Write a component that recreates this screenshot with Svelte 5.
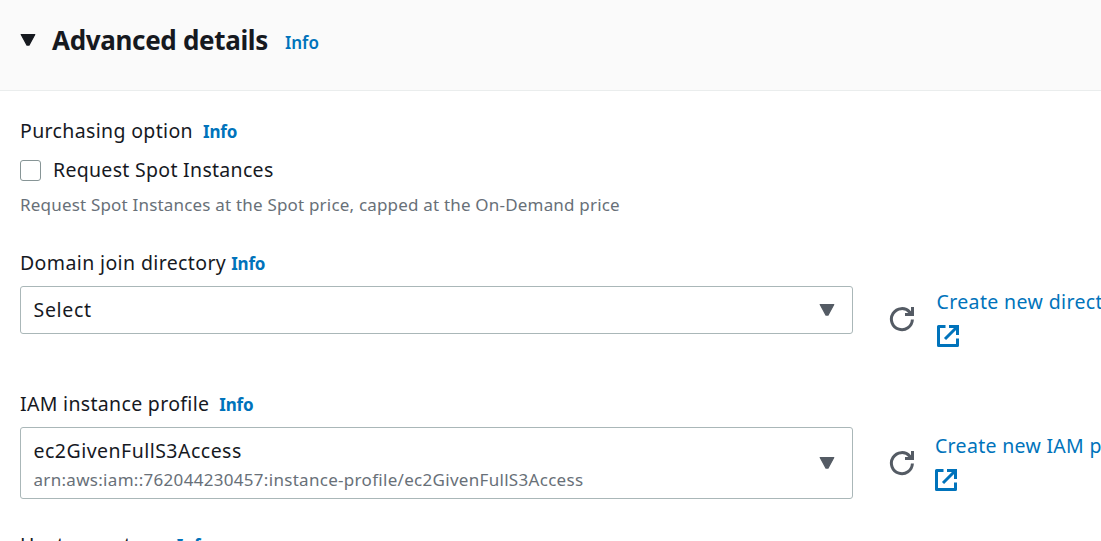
<script>
  const selects = [
    {
      label: 'Domain join directory', labelSpacing: 0.38, gap: 5,
      value: 'Select', valueSpacing: 0.7, detail: '',
      link: 'Create new directory', linkSpacing: 0.37
    },
    {
      label: 'IAM instance profile', labelSpacing: 0.32, gap: 10,
      value: 'ec2GivenFullS3Access', valueSpacing: 0.48,
      detail: 'arn:aws:iam::762044230457:instance-profile/ec2GivenFullS3Access',
      link: 'Create new IAM profile', linkSpacing: 0.3
    }
  ];
</script>

{#snippet caret()}
  <svg class="caret" width="16" height="14" viewBox="0 0 16 14" aria-hidden="true">
    <path d="M1.2 1.5h13.6L9 12.1H7z" fill="currentColor" stroke="currentColor" stroke-width="1.2" stroke-linejoin="round" />
  </svg>
{/snippet}

<main class="panel">
  <header class="header">
    {@render caret()}
    <h2>Advanced details</h2>
    <a class="info semibold" href="#info">Info</a>
  </header>

  <div class="content">
    <section class="purchasing">
      <div class="label"><span class="purchase-text">Purchasing option</span><a class="info" href="#info">Info</a></div>
      <label class="check"><input type="checkbox" /><span>Request Spot Instances</span></label>
      <p class="hint">Request Spot Instances at the Spot price, capped at the On-Demand price</p>
    </section>

    {#each selects as s}
      <section class="field" class:tall={s.detail}>
        <div class="label" style="gap: {s.gap}px">
          <span style="letter-spacing: {s.labelSpacing}px">{s.label}</span><a class="info" href="#info">Info</a>
        </div>
        <div class="row">
          <button class="select">
            <span class="texts">
              <span class="value" style="letter-spacing: {s.valueSpacing}px">{s.value}</span>
              {#if s.detail}<span class="detail">{s.detail}</span>{/if}
            </span>
            {@render caret()}
          </button>
          <button class="refresh" aria-label="Refresh">
            <svg width="26" height="26" viewBox="0 0 26 26" fill="none" stroke="currentColor" stroke-width="3">
              <path d="M23.4 13.5A10.5 10.5 0 1 1 20.8 6.2L23.2 8.6" />
              <path d="M23.5 1v7.5H16" />
              <path d="M18.5 8.5H23.5V3.5z" fill="currentColor" stroke="none" />
            </svg>
          </button>
          <a class="create" href="#create">
            <span style="letter-spacing: {s.linkSpacing}px">{s.link}</span>
            <svg width="22" height="22" viewBox="0 0 22 22" fill="none" stroke="currentColor" stroke-width="3">
              <path d="M8.5 1.5h-7v19h19v-7" stroke-linejoin="round" />
              <path d="M12 1.5h8.5V10" />
              <path d="M20 2L8 14" />
            </svg>
          </a>
        </div>
      </section>
    {/each}

    <div class="label hostname"><span>Hostname type</span><a class="info" href="#info">Info</a></div>
  </div>
</main>

<style>
  :global(body) { background: #fff; overflow: hidden; }
  .panel {
    height: 541px;
    overflow: hidden;
    box-sizing: border-box;
    color: #16191f;
    font: 400 19.5px/24px "Noto Sans", sans-serif;
    white-space: nowrap;
  }
  .header {
    display: flex;
    box-sizing: border-box;
    height: 91px;
    padding: 19px 20px 0;
    background: #fafafa;
    border-bottom: 1px solid #eaeded;
  }
  .header .caret { margin: 14px 16px 0 0; }
  h2 { margin: 0; font-size: 26px; line-height: 42px; font-weight: 700; letter-spacing: -0.33px; }
  .header .info { margin-left: 17px; line-height: 47px; letter-spacing: 0; }
  .info { color: #0073bb; font-size: 17px; font-weight: 700; letter-spacing: -0.2px; text-decoration: none; }
  .info.semibold { font-weight: 600; }
  .content { padding: 28px 0 0 20px; }
  .label { display: flex; align-items: baseline; height: 24px; }
  .purchasing { height: 132px; }
  .purchase-text { margin-right: 10px; letter-spacing: 0.35px; }
  .check { display: flex; align-items: center; height: 24px; margin-top: 15px; letter-spacing: 0.3px; }
  input {
    appearance: none;
    box-sizing: border-box;
    width: 21px;
    height: 21px;
    margin: 0 12px 0 0;
    border: 1.5px solid #879596;
    border-radius: 3px;
    background: #fff;
  }
  .hint { margin: 13px 0 0; color: #687078; font-size: 17px; line-height: 20px; letter-spacing: 0.19px; }
  .field { height: 141px; }
  .row { display: flex; margin-top: 11px; }
  button { padding: 0; border: 0; background: none; font: inherit; text-align: left; }
  .select {
    display: flex;
    flex: none;
    align-items: center;
    justify-content: space-between;
    box-sizing: border-box;
    width: 833px;
    height: 48px;
    padding: 0 17px 0 12.5px;
    border: 1px solid #aab7b8;
    border-radius: 3px;
    color: #16191f;
  }
  .tall .select { height: 72px; }
  .texts { display: flex; flex-direction: column; }
  .tall .texts { gap: 5px; padding-top: 5px; }
  .detail { color: #687078; font-size: 17px; letter-spacing: 0.3px; }
  .select .caret, .refresh { color: #545b64; }
  .refresh { flex: none; width: 26px; height: 26px; margin: 20px 0 0 36px; }
  .refresh svg, .create svg { display: block; }
  .create {
    display: flex;
    flex: none;
    flex-direction: column;
    gap: 11px;
    margin: 4px 0 0 21.5px;
    color: #0073bb;
    text-decoration: none;
  }
  .create svg { margin-left: 0.5px; }
  .tall .refresh { margin-top: 23px; }
  .tall .create { margin: 7px 0 0 20px; }
  .tall .create svg { margin-left: 0; }
  .hostname { padding-top: 0; }
  .hostname span { margin-right: 11px; letter-spacing: 0.45px; }
</style>
